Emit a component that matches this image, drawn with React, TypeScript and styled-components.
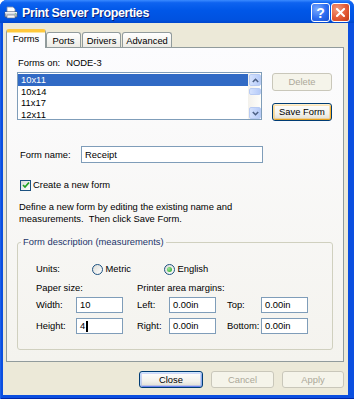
import styled, { createGlobalStyle } from 'styled-components';

const GlobalStyle = createGlobalStyle`
  html, body {
    margin: 0;
    padding: 0;
    background: #ffffff;
  }
  body {
    font-family: 'Liberation Sans', Arial, sans-serif;
    font-size: 9.4px;
    line-height: 12px;
    color: #000;
  }
`;

const Window = styled.div`
  width: 354px;
  height: 399px;
  display: flex;
  flex-direction: column;
  background: #0b4fe0;
  border-radius: 7px 7px 0 0;
  overflow: hidden;
  box-shadow: inset 1px 0 0 #1c5fe8, inset 0 -1px 0 #0026a8;
`;

const TitleBar = styled.div`
  height: 23px;
  flex: none;
  box-sizing: border-box;
  display: flex;
  align-items: center;
  padding: 2px 4px 0 4px;
  background: linear-gradient(#3b8bff 0%, #0e63f0 12%, #0057e8 45%, #0052e0 85%, #0046cc 100%);
`;

const TitleText = styled.div`
  flex: 1;
  margin-left: 4px;
  color: #fff;
  font-weight: bold;
  font-size: 12.5px;
  letter-spacing: -0.4px;
  text-shadow: 1px 1px 0 #0a1e78;
`;

const CaptionButton = styled.div<{ $variant: 'help' | 'close' }>`
  width: 19px;
  height: 19px;
  box-sizing: border-box;
  border: 1px solid #fff;
  border-radius: 3px;
  margin-left: 1px;
  display: flex;
  align-items: center;
  justify-content: center;
  color: #fff;
  font-weight: bold;
  font-size: 14px;
  background: ${(p) =>
    p.$variant === 'close'
      ? 'radial-gradient(circle at 30% 30%, #f39a7c, #e35a36 55%, #c33a16)'
      : 'radial-gradient(circle at 30% 30%, #7aaaff, #2d6cf0 55%, #1850d0)'};
`;

const Client = styled.div`
  flex: 1;
  margin: 0 6px 4px 3px;
  background: #ece9d8;
  display: flex;
  flex-direction: column;
  padding: 6px 4px 0 3px;
`;

const Tabs = styled.div`
  display: flex;
  align-items: flex-end;
  height: 18px;
  position: relative;
  z-index: 1;
`;

const Tab = styled.div<{ $active?: boolean; $width: number; $gap?: number }>`
  width: ${(p) => p.$width}px;
  margin-left: ${(p) => p.$gap ?? 0}px;
  box-sizing: border-box;
  text-align: center;
  border: 1px solid #919b9c;
  border-radius: 3px 3px 0 0;
  ${(p) =>
    p.$active
      ? `
    height: 19px;
    margin-bottom: -1px;
    border-top: 3px solid #ffc83c;
    border-bottom: none;
    box-shadow: inset 0 1px 0 #fce69e;
    background: #fcfcfe;
    padding-top: 1px;
  `
      : `
    height: 15px;
    border-bottom: none;
    padding-top: 2px;
    background: linear-gradient(#ffffff, #ecebe5);
  `}
`;

const Panel = styled.div`
  height: 315px;
  box-sizing: border-box;
  border: 1px solid #919b9c;
  background: linear-gradient(#fcfcfe, #f4f3ee);
  padding: 9px 11px 0 10px;
  display: flex;
  flex-direction: column;
`;

const TopRow = styled.div`
  display: flex;
  gap: 10px;
`;

const LeftCol = styled.div`
  width: 245px;
  display: flex;
  flex-direction: column;
`;

const FormsOn = styled.div`
  margin-left: 1px;
  span {
    margin-left: 6px;
  }
`;

const ListBox = styled.div`
  margin-top: 3px;
  height: 48px;
  box-sizing: border-box;
  border: 1px solid #7f9db9;
  background: #fff;
  display: flex;
  overflow: hidden;
`;

const Rows = styled.div`
  flex: 1;
  padding-top: 1px;
`;

const ListRow = styled.div<{ $selected?: boolean }>`
  height: 11.5px;
  line-height: 11.5px;
  padding-left: 3px;
  background: ${(p) => (p.$selected ? '#316ac5' : 'transparent')};
  color: ${(p) => (p.$selected ? '#fff' : '#000')};
`;

const ScrollBar = styled.div`
  width: 13px;
  box-sizing: border-box;
  padding: 1px 0 0 1px;
  display: flex;
  flex-direction: column;
  background: linear-gradient(90deg, #f3f1ec, #fefefb);
`;

const ScrollButton = styled.div<{ $thumb?: boolean }>`
  width: 12px;
  height: ${(p) => (p.$thumb ? 7 : 12)}px;
  margin-top: ${(p) => (p.$thumb ? 2 : 0)}px;
  box-sizing: border-box;
  border: 1px solid #b8cbf3;
  border-radius: 2px;
  background: linear-gradient(90deg, #d5e2fd, #c2d4fb 60%, #b6cbf7);
  display: flex;
  align-items: center;
  justify-content: center;
`;

const Spacer = styled.div`
  flex: 1;
`;

const RightCol = styled.div`
  padding-top: 16px;
  display: flex;
  flex-direction: column;
  gap: 12px;
`;

const Button = styled.div<{ $w: number; $h?: number; $disabled?: boolean; $glow?: 'orange' | 'blue' }>`
  width: ${(p) => p.$w}px;
  height: ${(p) => p.$h ?? 18}px;
  box-sizing: border-box;
  border: 1px solid ${(p) => (p.$disabled ? '#c9c7ba' : '#003c74')};
  border-radius: 3px;
  display: flex;
  align-items: center;
  justify-content: center;
  color: ${(p) => (p.$disabled ? '#aca899' : '#000')};
  background: ${(p) =>
    p.$disabled ? '#f5f4ea' : 'linear-gradient(#ffffff, #f3f2ec 60%, #e3e1d8 90%, #d6d0c5)'};
  box-shadow: ${(p) =>
    p.$glow === 'orange'
      ? 'inset 0 1px 0 #fff0cf, inset 1px 0 0 #fbd88c, inset -1px 0 0 #f8b330, inset 0 -1px 0 #e5a01a, inset 0 0 0 2px rgba(248, 179, 48, 0.35)'
      : p.$glow === 'blue'
        ? 'inset 0 1px 0 #cee7ff, inset 1px 0 0 #bcd4f6, inset -1px 0 0 #89adf0, inset 0 -1px 0 #6982ee, inset 0 0 0 2px rgba(105, 130, 238, 0.3)'
        : 'none'};
`;

const FieldRow = styled.div<{ $top: number }>`
  display: flex;
  align-items: center;
  margin-top: ${(p) => p.$top}px;
  padding-left: 3px;
`;

const RowLabel = styled.div<{ $w: number }>`
  width: ${(p) => p.$w}px;
  flex: none;
`;

const Field = styled.div<{ $w: number; $h?: number }>`
  width: ${(p) => p.$w}px;
  height: ${(p) => p.$h ?? 16}px;
  box-sizing: border-box;
  border: 1px solid #7f9db9;
  background: #fff;
  padding-left: 3px;
  display: flex;
  align-items: center;
`;

const Caret = styled.span`
  display: inline-block;
  width: 2px;
  height: 11px;
  background: #000;
  margin-left: 0.5px;
`;

const CheckBox = styled.span`
  width: 11px;
  height: 11px;
  box-sizing: border-box;
  border: 1px solid #1c5180;
  background: linear-gradient(135deg, #dcdcd7, #ffffff);
  margin-right: 2px;
  display: flex;
  align-items: center;
  justify-content: center;
`;

const Description = styled.div`
  margin-top: 10px;
  padding-left: 2px;
  line-height: 11.5px;
`;

const Group = styled.fieldset`
  margin: 12px 0 0 0;
  padding: 0;
  width: 316px;
  box-sizing: border-box;
  min-width: 0;
  border: 1px solid #d0d0bf;
  border-radius: 3px;
`;

const Legend = styled.legend`
  margin-left: 3px;
  padding: 0 2px;
  color: #22346a;
  line-height: 12px;
`;

const GroupBody = styled.div`
  padding: 15px 0 15px 18px;
  display: flex;
  flex-direction: column;
`;

const UnitsRow = styled.div`
  display: flex;
  align-items: center;
  height: 12px;
`;

const RadioOption = styled.div<{ $w?: number }>`
  display: flex;
  align-items: center;
  width: ${(p) => (p.$w ? `${p.$w}px` : 'auto')};
  gap: 2.5px;
`;

const Radio = styled.span<{ $checked?: boolean }>`
  width: 11px;
  height: 11px;
  box-sizing: border-box;
  border-radius: 50%;
  border: 1px solid #1c5180;
  background: linear-gradient(135deg, #dcdcd7, #ffffff);
  display: flex;
  align-items: center;
  justify-content: center;
  &::after {
    content: '';
    width: 5px;
    height: 5px;
    border-radius: 50%;
    background: radial-gradient(circle at 35% 35%, #9ae896, #21a121);
    display: ${(p) => (p.$checked ? 'block' : 'none')};
  }
`;

const SizeHeadRow = styled.div`
  display: flex;
  margin-top: 7px;
`;

const SizeGrid = styled.div`
  margin-top: 3px;
  display: grid;
  grid-template-columns: 40px 47px 14px 32px 47px 11px 34px 47px;
  grid-auto-rows: 16px;
  row-gap: 5px;
  align-items: center;
`;

const ButtonRow = styled.div`
  margin-top: 9px;
  display: flex;
  justify-content: flex-end;
  gap: 8px;
`;

const Chevron = ({ up }: { up?: boolean }) => (
  <svg width="7" height="5" viewBox="0 0 7 5">
    <path
      d={up ? 'M0.8 4 L3.5 1.3 L6.2 4' : 'M0.8 1 L3.5 3.7 L6.2 1'}
      fill="none"
      stroke="#4d6185"
      strokeWidth="1.6"
    />
  </svg>
);

const PrinterIcon = () => (
  <svg width="14" height="13" viewBox="0 0 14 13">
    <path d="M3 1 L9 1 L11 3 L11 6 L3 6 Z" fill="#ffffff" stroke="#7c8aa8" strokeWidth="0.8" />
    <path d="M1 6 L13 6 L13 11 L1 11 Z" fill="#c9ced8" stroke="#4f5a70" strokeWidth="0.8" />
    <path d="M1 6 L13 6 L13 7.5 L1 7.5 Z" fill="#eef0f4" />
    <path d="M3 9 L11 9 L11 12 L3 12 Z" fill="#f7f7f7" stroke="#6d7688" strokeWidth="0.6" />
    <circle cx="11.3" cy="7.8" r="0.6" fill="#37b24d" />
  </svg>
);

const CloseX = () => (
  <svg width="9" height="9" viewBox="0 0 9 9">
    <path d="M1 1 L8 8 M8 1 L1 8" stroke="#fff" strokeWidth="2" strokeLinecap="square" />
  </svg>
);

const Check = () => (
  <svg width="8" height="8" viewBox="0 0 8 8">
    <path d="M1 4 L3 6 L7 1.5" fill="none" stroke="#21a121" strokeWidth="1.7" />
  </svg>
);

const forms = ['10x11', '10x14', '11x17', '12x11'];

export default function App() {
  return (
    <>
      <GlobalStyle />
      <Window>
        <TitleBar>
          <PrinterIcon />
          <TitleText>Print Server Properties</TitleText>
          <CaptionButton $variant="help">?</CaptionButton>
          <CaptionButton $variant="close">
            <CloseX />
          </CaptionButton>
        </TitleBar>
        <Client>
          <Tabs>
            <Tab $active $width={40}>
              Forms
            </Tab>
            <Tab $width={35}>Ports</Tab>
            <Tab $width={39} $gap={1}>
              Drivers
            </Tab>
            <Tab $width={50} $gap={1}>
              Advanced
            </Tab>
          </Tabs>
          <Panel>
            <TopRow>
              <LeftCol>
                <FormsOn>
                  Forms on:<span>NODE-3</span>
                </FormsOn>
                <ListBox>
                  <Rows>
                    {forms.map((f, i) => (
                      <ListRow key={f} $selected={i === 0}>
                        {f}
                      </ListRow>
                    ))}
                  </Rows>
                  <ScrollBar>
                    <ScrollButton>
                      <Chevron up />
                    </ScrollButton>
                    <ScrollButton $thumb />
                    <Spacer />
                    <ScrollButton>
                      <Chevron />
                    </ScrollButton>
                  </ScrollBar>
                </ListBox>
              </LeftCol>
              <RightCol>
                <Button $w={60} $disabled>
                  Delete
                </Button>
                <Button $w={60} $glow="orange">
                  Save Form
                </Button>
              </RightCol>
            </TopRow>

            <FieldRow $top={25}>
              <RowLabel $w={61}>Form name:</RowLabel>
              <Field $w={182} $h={17}>
                Receipt
              </Field>
            </FieldRow>

            <FieldRow $top={16}>
              <CheckBox>
                <Check />
              </CheckBox>
              Create a new form
            </FieldRow>

            <Description>
              Define a new form by editing the existing name and
              <br />
              measurements.&nbsp; Then click Save Form.
            </Description>

            <Group>
              <Legend>Form description (measurements)</Legend>
              <GroupBody>
                <UnitsRow>
                  <RowLabel $w={56}>Units:</RowLabel>
                  <RadioOption $w={72}>
                    <Radio />
                    Metric
                  </RadioOption>
                  <RadioOption>
                    <Radio $checked />
                    English
                  </RadioOption>
                </UnitsRow>
                <SizeHeadRow>
                  <RowLabel $w={101}>Paper size:</RowLabel>
                  <div>Printer area margins:</div>
                </SizeHeadRow>
                <SizeGrid>
                  <div>Width:</div>
                  <Field $w={47}>10</Field>
                  <div />
                  <div>Left:</div>
                  <Field $w={47}>0.00in</Field>
                  <div />
                  <div>Top:</div>
                  <Field $w={47}>0.00in</Field>

                  <div>Height:</div>
                  <Field $w={47}>
                    4<Caret />
                  </Field>
                  <div />
                  <div>Right:</div>
                  <Field $w={47}>0.00in</Field>
                  <div />
                  <div>Bottom:</div>
                  <Field $w={47}>0.00in</Field>
                </SizeGrid>
              </GroupBody>
            </Group>
          </Panel>
          <ButtonRow>
            <Button $w={64} $h={17} $glow="blue">
              Close
            </Button>
            <Button $w={63} $h={17} $disabled>
              Cancel
            </Button>
            <Button $w={62} $h={17} $disabled>
              Apply
            </Button>
          </ButtonRow>
        </Client>
      </Window>
    </>
  );
}
